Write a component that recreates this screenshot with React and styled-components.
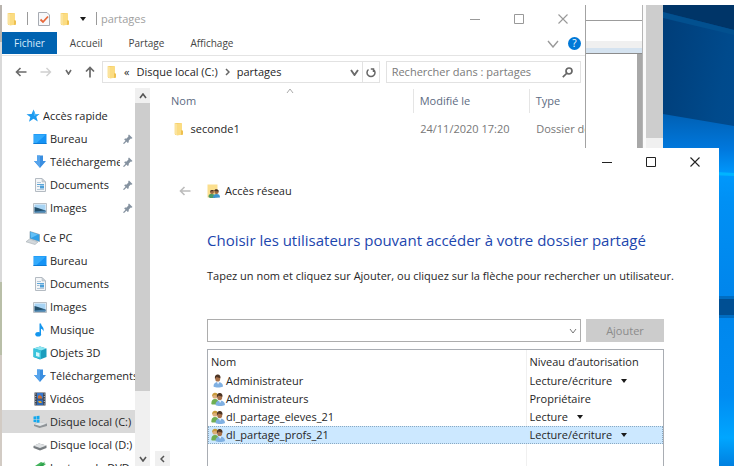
import React from "react";
import styled, { createGlobalStyle } from "styled-components";

const GlobalStyle = createGlobalStyle`
  *, *::before, *::after { box-sizing: border-box; }
  html, body { margin: 0; height: 100%; overflow: hidden; }
  body {
    background: #fff;
    color: #262626;
    font-family: "Open Sans", "Noto Sans", sans-serif;
    font-size: 11px;
    line-height: 18px;
  }
  button, input { font: inherit; color: inherit; }
  button { padding: 0; border: 0; background: none; }
  a { color: inherit; text-decoration: none; }
  ul { list-style: none; margin: 0; padding: 0; }
  svg { display: block; flex: none; }
`;

/* ---------- desktop ---------- */

const Desktop = styled.main`
  position: relative;
  display: flex;
  height: 100vh;
  padding-top: 5px;
  overflow: hidden;
`;

const BackApp = styled.div`
  flex: 1;
  display: flex;
  background: linear-gradient(#b9b4ae 0 8%, #d9d9d9 8% 60%, #b9bfa8 60% 76%, #d2cbc4 76%);
`;

const BackPane = styled.div`
  flex: 1;
  margin-left: 2px;
  display: flex;
  flex-direction: column;
  background: #fff;
  border-right: 1px solid #b5b5b5;
`;

const BackBar = styled.div`
  height: ${(p) => p.$h}px;
  background: ${(p) => p.$bg};
  border-bottom: 1px solid ${(p) => p.$line};
`;

const BackBody = styled.div`
  flex: 1;
  border-right: 5px solid #a8a8a8;
`;

const BackScroll = styled.div`
  width: 20px;
  border-left: 3px solid #fafafa;
  background: linear-gradient(#cdcdcd 0 133px, #f0f0f0 133px);
`;

const Wall = styled.svg`
  width: 71px;
  height: 100%;
`;

const Wallpaper = () => (
  <Wall viewBox="0 0 71 461" preserveAspectRatio="none" aria-hidden="true">
    <defs>
      <linearGradient id="dark" x1="0" y1="0" x2="1" y2="1">
        <stop offset="0" stopColor="#003d78" />
        <stop offset="0.5" stopColor="#004a8c" />
        <stop offset="1" stopColor="#004e96" />
      </linearGradient>
      <linearGradient id="bright" x1="0" y1="0" x2="0" y2="1">
        <stop offset="0" stopColor="#0060b4" />
        <stop offset="0.1" stopColor="#0078dd" />
        <stop offset="0.17" stopColor="#0098fc" />
        <stop offset="0.25" stopColor="#0090f4" />
        <stop offset="0.5" stopColor="#0086ec" />
        <stop offset="0.8" stopColor="#008cf2" />
        <stop offset="0.92" stopColor="#00a6ff" />
        <stop offset="1" stopColor="#0080e0" />
      </linearGradient>
    </defs>
    <rect width="71" height="461" fill="url(#dark)" />
    <path d="M0 0H71V25L0 7Z" fill="#003568" />
    <path d="M0 7L71 25V30L0 13Z" fill="#02508f" />
    <path d="M0 109L71 121V461H0Z" fill="url(#bright)" />
    <path d="M0 164L71 168V171L0 168Z" fill="#00b4ff" />
    <path d="M0 294H71V310H0Z" fill="#004f93" />
    <path d="M0 291H71V294H0ZM0 310H71V313H0Z" fill="#006dc2" />
  </Wall>
);

/* ---------- small glyphs ---------- */

const Stroke = ({ w, h, d, color = "#666", sw = 1, fill = "none" }) => (
  <svg width={w} height={h} viewBox={`0 0 ${w} ${h}`} fill={fill} stroke={color} strokeWidth={sw} aria-hidden="true">
    <path d={d} />
  </svg>
);

const ArrowLeft = ({ color }) => <Stroke w={12} h={12} d="M11.500 6H1.500M5.500 2L1.500 6L5.500 10" color={color} sw={1.600} />;
const ArrowRight = ({ color }) => <Stroke w={12} h={12} d="M0.500 6H10.500M6.500 2L10.500 6L6.500 10" color={color} sw={1.400} />;
const ArrowUp = () => <Stroke w={10} h={12} d="M5 11.500V1.500M1 5.500L5 1.500L9 5.500" color="#6a6a6a" sw={1.700} />;
const Chevron = ({ color = "#6a6a6a", sw = 1.600, w = 8, h = 6 }) => (
  <Stroke w={w} h={h} d={`M1 1L${w / 2} ${h - 1}L${w - 1} 1`} color={color} sw={sw} />
);
const ChevronUp = ({ color = "#555", sw = 1.600, w = 8 }) => <Stroke w={w} h={6} d={`M1 5L${w / 2} 1L${w - 1} 5`} color={color} sw={sw} />;
const MinimizeGlyph = ({ color }) => <Stroke w={10} h={10} d="M0 5.500H10" color={color} />;
const MaximizeGlyph = ({ color }) => <Stroke w={10} h={10} d="M0.500 0.500H9.500V9.500H0.500Z" color={color} />;
const CloseGlyph = ({ color }) => <Stroke w={10} h={10} d="M0.500 0.500L9.500 9.500M9.500 0.500L0.500 9.500" color={color} sw={1.100} />;
const Caret = () => (
  <svg width="6" height="4" viewBox="0 0 6 4" aria-hidden="true"><path d="M0 0H6L3 4Z" fill="#1a1a1a" /></svg>
);

/* ---------- pictured icons ---------- */

const FolderIcon = () => (
  <svg width="10" height="14" viewBox="0 0 10 14" aria-hidden="true">
    <path d="M1 1H7V13H1Z" fill="#f6cf6a" />
    <path d="M0.500 1L3 2V13.500L0.500 12Z" fill="#fbe39c" />
    <path d="M3 2L8 1V8L9 9V12.500L3 13.500Z" fill="#fbdc82" />
    <path d="M7 8L9 9V12.500L7 13Z" fill="#eec050" />
  </svg>
);

const CheckDocIcon = () => (
  <svg width="12" height="14" viewBox="0 0 12 14" aria-hidden="true">
    <path d="M0.500 0.500H9L11.500 3V13.500H0.500Z" fill="#f7f8fa" stroke="#a7abb2" />
    <path d="M2.500 7.500L5 10L10 4.500" fill="none" stroke="#e8683a" strokeWidth="1.800" />
  </svg>
);

const glyphs = {
  star: (
    <>
      <path d="M7.500 0.500L9.300 5H13.500L10.300 7.800L11.800 12.500L7.500 9.800L3 12.700L4.300 8L0.500 5.200L5.600 5Z" fill="#1b9af0" />
      <path d="M7.500 0.500L9.300 5H13.500L8 7Z" fill="#4db5f7" />
    </>
  ),
  desktop: (
    <>
      <path d="M0.500 2H13.500V12H0.500Z" fill="#1593f5" />
      <path d="M1 2.500H13L3 11.500H1Z" fill="#32aafc" />
      <path d="M0.500 11H13.500V12H0.500Z" fill="#0c7bd6" />
    </>
  ),
  download: (
    <>
      <path d="M4 0.500H10V6H13L7 13L1 6H4Z" fill="#3a8ee0" />
      <path d="M4 0.500H7V12.500L1 6H4Z" fill="#56a4ec" />
    </>
  ),
  document: (
    <>
      <path d="M2.500 0.500H9L12.500 4V13.500H2.500Z" fill="#f4f6f8" stroke="#b4bbc2" />
      <path d="M9 0.500V4H12.500Z" fill="#ccd3da" stroke="#aab2ba" strokeWidth="0.500" />
      <path d="M4 4.500H8M4 11.500H11" stroke="#b4c8d8" />
      <path d="M4 6.500H11" stroke="#5ba6da" />
      <path d="M7 7.500H11V10.500H7Z" fill="#4d9fd8" />
      <path d="M4 8.500H6.500" stroke="#9dbdd4" />
    </>
  ),
  image: (
    <>
      <path d="M0.500 2.500H13.500V12.500H0.500Z" fill="#f3f5f7" stroke="#b9bfc5" />
      <path d="M1.500 3.500H12.500V11.500H1.500Z" fill="#a8d4f4" />
      <path d="M1.500 6L5 7L12.500 9.500V11.500H1.500Z" fill="#24506b" />
      <path d="M1.500 10.500L12.500 9.500V11.500H1.500Z" fill="#4b86b4" />
    </>
  ),
  pc: (
    <>
      <path d="M4 0.500L13.500 3.500V10.500L4 7.500Z" fill="#2d9fe8" stroke="#7790a3" strokeWidth="0.600" />
      <path d="M4.500 1L12 3.500L5 7Z" fill="#62c0f7" />
      <path d="M3.500 8L12 11L9 13.500L0 10.800Z" fill="#d3d8dc" stroke="#a5acb2" strokeWidth="0.600" />
    </>
  ),
  music: (
    <>
      <path d="M6.500 0.500H8C8.200 3.500 11.500 4 10.500 8.500C10 6.500 9 6 8 5.800V11H6.500Z" fill="#1496ee" />
      <ellipse cx="5.200" cy="11.200" rx="2.900" ry="2.300" fill="#1496ee" />
    </>
  ),
  cube: (
    <>
      <path d="M0.500 2.500L7 0.500L13.500 2.500V11L7 13.500L0.500 11Z" fill="#1a9dbd" />
      <path d="M0.500 2.500L7 0.500L13.500 2.500L8 4.500Z" fill="#8ce6f2" />
      <path d="M0.500 2.500L8 4.500V13L0.500 11Z" fill="#38c4dc" />
      <path d="M3 6L6.500 7V11L3 10Z" fill="#d4f7fb" />
    </>
  ),
  video: (
    <>
      <path d="M1.500 0.500H12.500V13.500H1.500Z" fill="#3d4552" />
      <path d="M4 1H10V6.500H4Z" fill="#3878cf" />
      <path d="M4 7.500H10V13H4Z" fill="#2d68b8" />
      <path d="M5 4L7 3L9 5V6.500H5Z" fill="#d2702e" />
      <path d="M5 9H8L9 11H6Z" fill="#e0a32c" />
      <path d="M2.700 1.500V13M11.300 1.500V13" stroke="#c8ccd2" strokeDasharray="1 1.500" />
    </>
  ),
  diskWin: (
    <>
      <path d="M1 9.500L5 7L14 8.500V11L6.500 13L1 11Z" fill="#8f9498" />
      <path d="M1 9.300L6 7L14 8.500L7 11Z" fill="#e2e5e7" />
      <path d="M0.500 1.500L3 1.200V4H0.500ZM3.500 1.100L6.500 0.700V4H3.500ZM0.500 4.500H3V7.300L0.500 7ZM3.500 4.500H6.500V7.800L3.500 7.400Z" fill="#12a8ee" />
    </>
  ),
  disk: (
    <>
      <path d="M0.500 8L6 5.500L13.500 7.500V10L7 12.500L0.500 10Z" fill="#777c80" />
      <path d="M0.500 7.800L6 5.500L13.500 7.500L7 10Z" fill="#dfe2e4" />
    </>
  ),
  dvd: (
    <>
      <path d="M2 5L8 1L13 3L9 6L11 13H2Z" fill="#43b35c" />
      <path d="M5 6L12 0.500L8 8Z" fill="#2fa04c" />
      <path d="M1 7H6V13H1Z" fill="#58a8cf" />
    </>
  ),
};

const Glyph = ({ name }) => (
  <svg width="14" height="14" viewBox="0 0 14 14" fill="none" aria-hidden="true">{glyphs[name]}</svg>
);

const PinIcon = () => (
  <svg width="10" height="10" viewBox="0 0 10 10" aria-hidden="true">
    <path d="M6 0.500L9.500 4L8.500 4.800L7.800 4.600L5.800 6.500L5.700 8.300L4.800 9L1.200 5.400L2 4.500L3.700 4.400L5.500 2.300L5.200 1.300Z" fill="#8592a0" />
    <path d="M3.200 7L0.500 9.700" stroke="#8592a0" strokeWidth="1.200" />
  </svg>
);

const UserIcon = ({ group }) => (
  <svg width="14" height="14" viewBox="0 0 14 14" aria-hidden="true">
    {group && (
      <>
        <path d="M0.300 12C0.300 8.500 1.500 7 4 7S8 9 8 12.500H1Z" fill="#6fae52" />
        <circle cx="4" cy="4" r="2.600" fill="#dcae7c" />
        <path d="M1.300 4.500C1 1.500 2.500 0.700 4.200 0.700S7 2 6.500 3.500L3 3Z" fill="#c89b3c" />
      </>
    )}
    <g transform={group ? "translate(1.500 0.500)" : "translate(-0.500 0)"}>
      <path d="M3 12.500C3 9.500 4.500 8 7.500 8S12.500 9.500 12.500 12.500C10 13.800 5 13.800 3 12.500Z" fill="#7fb0e2" />
      <path d="M6.500 8L7.500 10.500L9 8Z" fill="#f2f6fa" />
      <ellipse cx="7.200" cy="4.400" rx="2.500" ry="3.200" fill="#a8714a" />
      <path d="M4.500 5C4 1.500 5.500 0.600 7.400 0.600S10.400 2.500 9.900 4.300L6 2.900Z" fill="#4d3423" />
    </g>
  </svg>
);

const SharedFolderIcon = () => (
  <svg width="14" height="15" viewBox="0 0 14 15" aria-hidden="true">
    <path d="M0.500 0.500H10.500V13.500H0.500Z" fill="#fbdf8e" />
    <path d="M1.500 13C1.500 10.500 2.500 10 5 10S8 11 8 14H3Z" fill="#4d9a66" />
    <path d="M6 14C6 11 7 10 9.500 10S13 11 13 13.500Z" fill="#3c94cf" />
    <circle cx="5" cy="8" r="2" fill="#9a6a43" />
    <circle cx="9.500" cy="7.700" r="2.200" fill="#9a6a43" />
    <path d="M3 7.500C3.500 5.500 6.500 5.500 7 7ZM7.200 7C7.500 4.500 11.500 4.500 11.800 7.500Z" fill="#4a3425" />
  </svg>
);

/* ---------- explorer window ---------- */

const Explorer = styled.section`
  position: absolute;
  top: 5px;
  bottom: 0;
  left: 2px;
  right: 148px;
  display: flex;
  flex-direction: column;
  background: #fff;
  border-right: 1px solid #a3a3a3;
`;

const TitleBar = styled.header`
  display: flex;
  align-items: center;
  height: 27px;
  padding-left: 5px;
  color: #a0a0a0;
`;

const QuickTools = styled.div`
  display: flex;
  align-items: center;
  gap: 10px;
  flex: 1;
`;

const Rule = styled.span`
  width: 1px;
  height: 13px;
  background: #9a9a9a;
`;

const WindowTitle = styled.h1`
  margin: 0 0 0 -6px;
  font-size: 11px;
  font-weight: 400;
`;

const WindowButton = styled.button`
  display: flex;
  align-items: center;
  justify-content: center;
  width: 44px;
  height: 27px;
`;

const Ribbon = styled.nav`
  display: flex;
  align-items: center;
  height: 24px;
  padding-right: 4px;
  border-bottom: 1px solid #e4e4e4;
  font-size: 10px;
  color: #444;
`;

const Tab = styled.button`
  height: 22px;
  align-self: flex-start;
  padding: 0 ${(p) => (p.$active ? 12 : 13)}px;
  background: ${(p) => (p.$active ? "#0063b1" : "transparent")};
  color: ${(p) => (p.$active ? "#d9ebfa" : "inherit")};
`;

const Spacer = styled.span`
  flex: 1;
`;

const Help = styled.button`
  width: 13px;
  height: 13px;
  margin-left: 9px;
  border-radius: 50%;
  background: #0078d7;
  color: #fff;
  font-size: 10px;
  line-height: 13px;
`;

const AddressRow = styled.div`
  display: flex;
  align-items: center;
  gap: 6px;
  padding: 5px 4px 5px 0;
`;

const NavButtons = styled.div`
  display: flex;
  align-items: center;
  gap: 13px;
  width: 94px;
  padding-left: 13px;
`;

const PlainButton = styled.button`
  display: flex;
  align-items: center;
  line-height: 18px;
`;

const Field = styled.div`
  display: flex;
  align-items: center;
  height: 22px;
  flex: ${(p) => p.$grow} 1 0;
  border: 1px solid #e2e2e2;
`;

const Crumbs = styled.div`
  flex: 1;
  display: flex;
  align-items: center;
  gap: 7px;
  padding: 0 3px 0 4px;
  min-width: 0;
`;

const Refresh = styled.button`
  display: flex;
  align-items: center;
  justify-content: center;
  width: 17px;
  height: 20px;
  border-left: 1px solid #e2e2e2;
`;

const SearchInput = styled.input`
  flex: 1;
  min-width: 0;
  padding: 0 0 0 5px;
  border: 0;
  outline: 0;
  background: none;
  &::placeholder { color: #7a7a7a; opacity: 1; }
`;

const SearchButton = styled(PlainButton)`
  padding-right: 7px;
`;

const Body = styled.div`
  flex: 1;
  display: flex;
  min-height: 0;
`;

const Sidebar = styled.nav`
  width: 133px;
  padding-top: 16px;
  overflow: hidden;
`;

const Group = styled.ul`
  margin-bottom: 7px;
`;

const NavItem = styled.a`
  display: flex;
  align-items: center;
  gap: 3px;
  height: 23px;
  padding-left: ${(p) => (p.$root ? 24 : 31)}px;
  background: ${(p) => (p.$selected ? "#d9d9d9" : "transparent")};
  white-space: nowrap;
`;

const NavLabel = styled.span`
  flex: 1;
  min-width: 0;
  overflow: hidden;
`;

const PinSlot = styled.span`
  width: 12px;
`;

const ScrollColumn = styled.div`
  display: flex;
  flex-direction: column;
  width: 15px;
  background: #f0f0f0;
`;

const ScrollButton = styled.button`
  display: flex;
  align-items: center;
  justify-content: center;
  width: 15px;
  height: 15px;
  background: #f0f0f0;
`;

const ScrollThumb = styled.div`
  flex: 1;
  margin-bottom: 60px;
  background: #cdcdcd;
`;

const FilePane = styled.div`
  flex: 1;
  min-width: 0;
  display: flex;
  flex-direction: column;
  padding-left: 5px;
`;

const SortMark = styled.div`
  display: flex;
  height: 1px;
  padding-left: 131px;
`;

const FileTable = styled.table`
  width: 100%;
  table-layout: fixed;
  border-collapse: collapse;
  color: #777;
`;

const FileHead = styled.th`
  height: 24px;
  width: ${(p) => p.$w};
  padding: 0 6px 0 ${(p) => (p.$first ? 15 : 6)}px;
  border-left: 1px solid ${(p) => (p.$first ? "transparent" : "#e5e5e5")};
  color: #5d6b82;
  font-weight: 400;
  text-align: left;
`;

const FileCell = styled.td`
  height: 32px;
  padding: 0 0 0 ${(p) => (p.$first ? 18 : 7)}px;
  overflow: hidden;
  white-space: nowrap;
`;

const FileName = styled.span`
  display: flex;
  align-items: center;
  gap: 7px;
  color: #262626;
`;

const quickAccess = [
  ["desktop", "Bureau"],
  ["download", "Téléchargements"],
  ["document", "Documents"],
  ["image", "Images"],
];

const thisPc = [
  ["desktop", "Bureau"],
  ["document", "Documents"],
  ["image", "Images"],
  ["music", "Musique"],
  ["cube", "Objets 3D"],
  ["download", "Téléchargements"],
  ["video", "Vidéos"],
  ["diskWin", "Disque local (C:)"],
  ["disk", "Disque local (D:)"],
  ["dvd", "Lecteur de DVD"],
];

const NavGroup = ({ icon, label, items, pinned, selected }) => (
  <Group>
    <li><NavItem href="#" $root><Glyph name={icon} /><NavLabel>{label}</NavLabel></NavItem></li>
    {items.map(([name, text]) => (
      <li key={text}>
        <NavItem href="#" $selected={text === selected} aria-current={text === selected ? "page" : undefined}>
          <Glyph name={name} />
          <NavLabel>{text}</NavLabel>
          {pinned && <PinSlot><PinIcon /></PinSlot>}
        </NavItem>
      </li>
    ))}
  </Group>
);

const ExplorerWindow = () => (
  <Explorer aria-label="partages">
    <TitleBar>
      <QuickTools>
        <FolderIcon />
        <Rule />
        <PlainButton aria-label="Propriétés"><CheckDocIcon /></PlainButton>
        <PlainButton aria-label="Nouveau dossier"><FolderIcon /></PlainButton>
        <PlainButton aria-label="Personnaliser"><Caret /></PlainButton>
        <Rule />
        <WindowTitle>partages</WindowTitle>
      </QuickTools>
      <WindowButton aria-label="Réduire"><MinimizeGlyph color="#999" /></WindowButton>
      <WindowButton aria-label="Agrandir"><MaximizeGlyph color="#999" /></WindowButton>
      <WindowButton aria-label="Fermer"><CloseGlyph color="#999" /></WindowButton>
    </TitleBar>
    <Ribbon>
      <Tab $active>Fichier</Tab>
      <Tab>Accueil</Tab>
      <Tab>Partage</Tab>
      <Tab>Affichage</Tab>
      <Spacer />
      <PlainButton aria-label="Développer le ruban"><Chevron w={12} h={8} color="#999" sw={1.400} /></PlainButton>
      <Help aria-label="Aide">?</Help>
    </Ribbon>
    <AddressRow>
      <NavButtons>
        <PlainButton aria-label="Précédent"><ArrowLeft color="#6a6a6a" /></PlainButton>
        <PlainButton aria-label="Suivant"><ArrowRight color="#d0d0d0" /></PlainButton>
        <PlainButton aria-label="Emplacements récents"><Chevron w={7} h={6} /></PlainButton>
        <PlainButton aria-label="Dossier parent"><ArrowUp /></PlainButton>
      </NavButtons>
      <Field $grow={278}>
        <Crumbs>
          <FolderIcon />
          <span>«</span>
          <PlainButton>Disque local (C:)</PlainButton>
          <Stroke w={5} h={8} d="M1 1L4 4L1 7" sw={1.500} />
          <PlainButton>partages</PlainButton>
          <Spacer />
          <PlainButton aria-label="Historique"><Chevron w={9} h={7} sw={1.900} /></PlainButton>
        </Crumbs>
        <Refresh aria-label="Actualiser">
          <Stroke w={10} h={11} d="M2.500 2.500A4 4 0 1 0 7.500 2.500M7.500 5V2H4.800" sw={1.500} />
        </Refresh>
      </Field>
      <Field $grow={195}>
        <SearchInput aria-label="Rechercher" placeholder="Rechercher dans : partages" />
        <SearchButton aria-label="Lancer la recherche">
          <Stroke w={11} h={11} d="M4 4A3 3 0 1 1 10 4A3 3 0 0 1 4 4M5 6L0.800 10.200" sw={1.700} />
        </SearchButton>
      </Field>
    </AddressRow>
    <Body>
      <Sidebar aria-label="Volet de navigation">
        <NavGroup icon="star" label="Accès rapide" items={quickAccess} pinned />
        <NavGroup icon="pc" label="Ce PC" items={thisPc} selected="Disque local (C:)" />
      </Sidebar>
      <ScrollColumn>
        <ScrollButton aria-label="Défiler vers le haut"><ChevronUp /></ScrollButton>
        <ScrollThumb />
        <ScrollButton aria-label="Défiler vers le bas"><Chevron color="#555" /></ScrollButton>
      </ScrollColumn>
      <FilePane>
        <SortMark><ChevronUp color="#aaa" sw={1} /></SortMark>
        <FileTable>
          <thead>
            <tr>
              <FileHead $first $w="60%">Nom</FileHead>
              <FileHead $w="27%">Modifié le</FileHead>
              <FileHead $w="13%">Type</FileHead>
            </tr>
          </thead>
          <tbody>
            <tr>
              <FileCell $first><FileName><FolderIcon />seconde1</FileName></FileCell>
              <FileCell>24/11/2020 17:20</FileCell>
              <FileCell>Dossier de fichiers</FileCell>
            </tr>
          </tbody>
        </FileTable>
        <Spacer />
        <ScrollButton aria-label="Défiler vers la gauche">
          <Stroke w={5} h={8} d="M4 1L1 4L4 7" color="#555" sw={1.500} />
        </ScrollButton>
      </FilePane>
    </Body>
  </Explorer>
);

/* ---------- sharing dialog ---------- */

const Dialog = styled.section`
  position: absolute;
  top: 148px;
  bottom: 0;
  left: 170px;
  right: 15px;
  display: flex;
  flex-direction: column;
  background: #fff;
`;

const DialogTop = styled.div`
  display: flex;
  justify-content: flex-end;
  padding-right: 2px;
`;

const DialogHeader = styled.header`
  display: flex;
  align-items: center;
  padding: 7px 0 0 9px;
  margin-bottom: 26px;
`;

const DialogName = styled.h2`
  display: flex;
  align-items: center;
  gap: 4px;
  margin: 0 0 0 16px;
  font-size: 11px;
  font-weight: 400;
`;

const Content = styled.div`
  flex: 1;
  display: flex;
  flex-direction: column;
  min-height: 0;
  padding: 0 55px 0 37px;
`;

const Question = styled.h3`
  margin: 0;
  color: #1c46ae;
  font-size: 15px;
  line-height: 28px;
  font-weight: 400;
  white-space: nowrap;
`;

const Instruction = styled.p`
  margin: 13px 0 34px;
  white-space: nowrap;
`;

const AddRow = styled.form`
  display: flex;
  gap: 5px;
  margin-bottom: 7px;
`;

const Combo = styled.div`
  flex: 1;
  display: flex;
  height: 23px;
  padding-right: 3px;
  border: 1px solid #adadad;
`;

const AddButton = styled.button`
  width: 78px;
  height: 23px;
  background: #cccccc;
  color: #8b8b8b;
`;

const ListFrame = styled.div`
  flex: 1;
  min-height: 0;
  overflow: hidden;
  padding-top: 2px;
  border: 1px solid #a9adb3;
  border-bottom: 0;
  background: linear-gradient(90deg, transparent 70%, #f0f0f0 70%, transparent calc(70% + 1px));
`;

const UserTable = styled.table`
  width: 100%;
  table-layout: fixed;
  border-collapse: collapse;
`;

const UserHead = styled.th`
  width: ${(p) => p.$w};
  height: 20px;
  padding: 0 3px;
  font-weight: 400;
  text-align: left;
`;

const UserRow = styled.tr`
  background: ${(p) => (p.$selected ? "#cce8ff" : "transparent")};
  outline: ${(p) => (p.$selected ? "1px dotted #8aa9c2" : "none")};
  outline-offset: -1px;
`;

const UserCell = styled.td`
  height: 18px;
  padding: 0 3px;
`;

const UserName = styled.span`
  display: flex;
  align-items: center;
  gap: 1px;
`;

const Level = styled.button`
  display: flex;
  align-items: center;
  gap: 9px;
  line-height: 18px;
`;

const users = [
  { name: "Administrateur", level: "Lecture/écriture", menu: true },
  { name: "Administrateurs", level: "Propriétaire", group: true },
  { name: "dl_partage_eleves_21", level: "Lecture", group: true, menu: true },
  { name: "dl_partage_profs_21", level: "Lecture/écriture", group: true, menu: true, selected: true },
];

const ShareDialog = () => (
  <Dialog role="dialog" aria-label="Accès réseau">
    <DialogTop>
      <WindowButton aria-label="Réduire"><MinimizeGlyph color="#222" /></WindowButton>
      <WindowButton aria-label="Agrandir"><MaximizeGlyph color="#222" /></WindowButton>
      <WindowButton aria-label="Fermer"><CloseGlyph color="#222" /></WindowButton>
    </DialogTop>
    <DialogHeader>
      <PlainButton aria-label="Retour"><ArrowLeft color="#bcbcbc" /></PlainButton>
      <DialogName><SharedFolderIcon />Accès réseau</DialogName>
    </DialogHeader>
    <Content>
      <Question>Choisir les utilisateurs pouvant accéder à votre dossier partagé</Question>
      <Instruction>
        Tapez un nom et cliquez sur Ajouter, ou cliquez sur la flèche pour rechercher un utilisateur.
      </Instruction>
      <AddRow onSubmit={(e) => e.preventDefault()}>
        <Combo>
          <SearchInput aria-label="Nom de l’utilisateur" />
          <PlainButton type="button" aria-label="Rechercher un utilisateur"><Chevron color="#777" sw={1} /></PlainButton>
        </Combo>
        <AddButton disabled>Ajouter</AddButton>
      </AddRow>
      <ListFrame>
        <UserTable>
          <thead>
            <tr>
              <UserHead $w="70%">Nom</UserHead>
              <UserHead $w="30%">Niveau d’autorisation</UserHead>
            </tr>
          </thead>
          <tbody>
            {users.map((u) => (
              <UserRow key={u.name} $selected={u.selected}>
                <UserCell><UserName><UserIcon group={u.group} />{u.name}</UserName></UserCell>
                <UserCell>{u.menu ? <Level aria-haspopup="menu">{u.level}<Caret /></Level> : u.level}</UserCell>
              </UserRow>
            ))}
          </tbody>
        </UserTable>
      </ListFrame>
    </Content>
  </Dialog>
);

export default function App() {
  return (
    <>
      <GlobalStyle />
      <Desktop>
        <BackApp>
          <BackPane>
            <BackBar $h={16} $bg="#fff" $line="#9c9c9c" />
            <BackBar $h={21} $bg="#fff" $line="#f0f0f0" />
            <BackBar $h={6} $bg="#f0f0f0" $line="#f0f0f0" />
            <BackBar $h={6} $bg="#d5e3f0" $line="#8c8c8c" />
            <BackBody />
          </BackPane>
          <BackScroll />
        </BackApp>
        <Wallpaper />
        <ExplorerWindow />
        <ShareDialog />
      </Desktop>
    </>
  );
}
